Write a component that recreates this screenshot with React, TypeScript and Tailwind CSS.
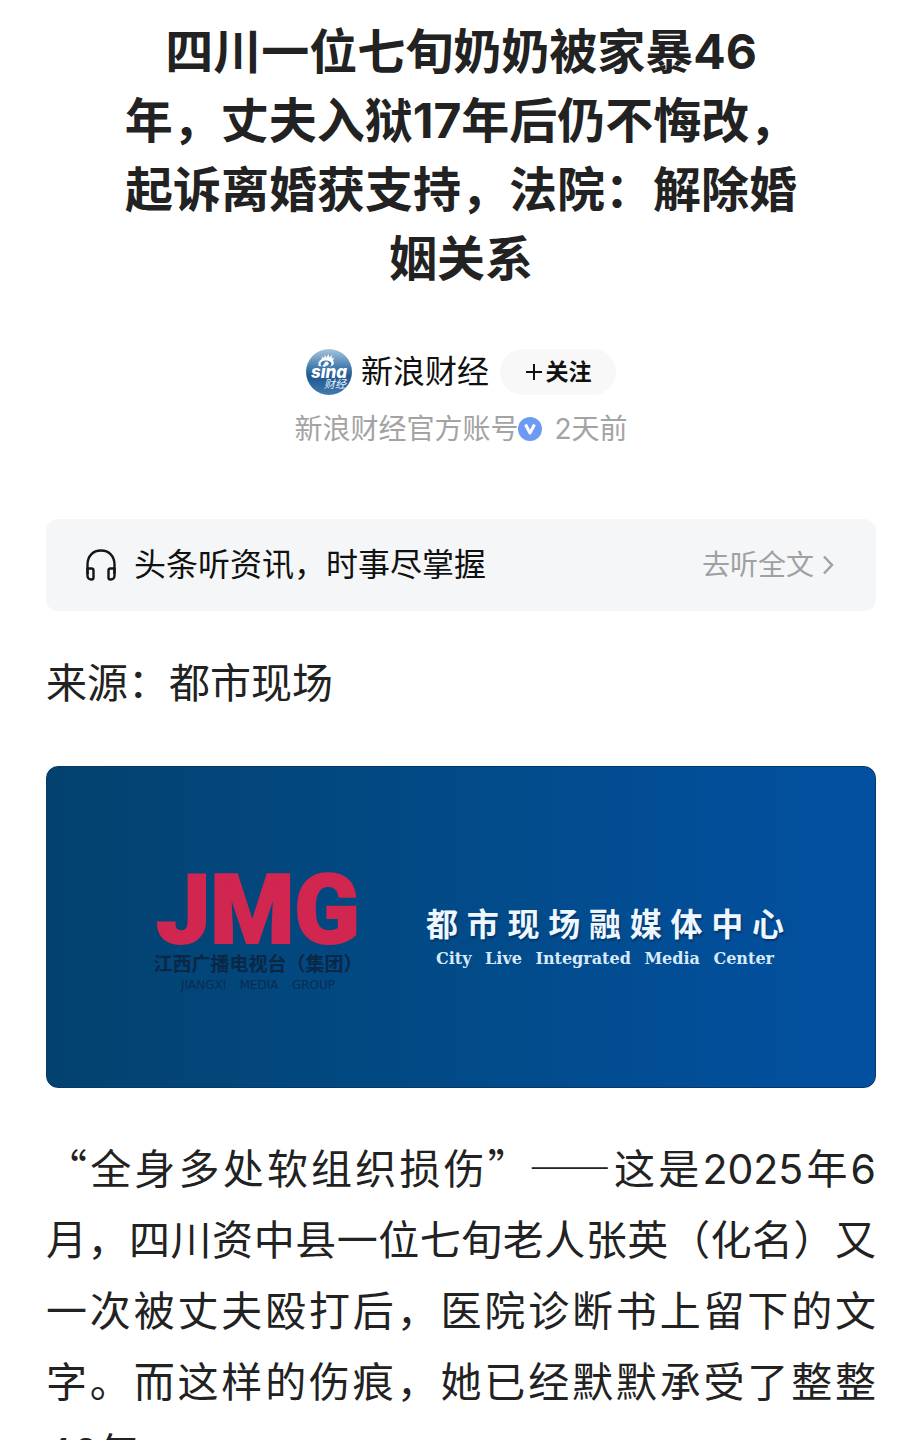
import type { ReactNode } from "react";

function FullWidth({ children }: { children: ReactNode }) {
  return <span className="font-['Noto_Sans_CJK_SC',sans-serif] leading-none">{children}</span>;
}

function SinaAvatar() {
  return (
    <svg viewBox="0 0 46 46" className="size-[46px] shrink-0" role="img" aria-label="新浪财经">
      <defs>
        <linearGradient id="sina-bg" x1="0" y1="0" x2="0" y2="1">
          <stop offset="0" stopColor="#a9c4dc" />
          <stop offset="0.35" stopColor="#4f85b4" />
          <stop offset="0.6" stopColor="#1f5790" />
          <stop offset="1" stopColor="#437cae" />
        </linearGradient>
      </defs>
      <circle cx="23" cy="23" r="23" fill="url(#sina-bg)" />
      <path d="M12.500 17c-.5-4 1.500-6 3.500-7l-.5-2.500 2.500 1.500.8-3 1.700 2.500 2-3.500.8 3.500 3-2.500-.8 3.500 3-.8-1.700 2.500c1.700 1.800 1.500 4.500-.8 5.600l-3 .9Z" fill="#fff" />
      <ellipse cx="20" cy="15" rx="5.500" ry="3.400" fill="#3f78aa" />
      <circle cx="20.500" cy="14.600" r="2.200" fill="#fff" />
      <text x="23" y="28.500" textAnchor="middle" fill="#fff" fontFamily="Inter, sans-serif" fontWeight="800" fontStyle="italic" fontSize="17">sina</text>
      <text x="29" y="39" textAnchor="middle" fill="#e8f1f8" fontFamily="Noto Sans CJK SC, sans-serif" fontStyle="italic" fontSize="11">财经</text>
    </svg>
  );
}

function VerifiedBadge() {
  return (
    <svg viewBox="0 0 24 24" className="size-6 shrink-0" role="img" aria-label="认证">
      <circle cx="12" cy="12" r="12" fill="#6d9bf3" />
      <path d="M7.500 7.500l4.500 8.500L16.500 7.500" fill="none" stroke="#fff" strokeWidth="3" strokeLinejoin="round" />
    </svg>
  );
}

function HeadphonesIcon() {
  return (
    <svg viewBox="0 0 32 32" className="size-8 shrink-0" fill="none" stroke="#161616" strokeWidth="2.400" strokeLinejoin="round" aria-hidden="true">
      <path d="M2.500 25V15.500C2.500 7 8 1.500 16 1.500S29.500 7 29.500 15.500V25" />
      <path d="M2.500 19.500H6.500a2 2 0 0 1 2 2V28.500a2 2 0 0 1-2 2H6a3.500 3.500 0 0 1-3.500-3.500ZM29.500 19.500H25.500a2 2 0 0 0-2 2V28.500a2 2 0 0 0 2 2H26a3.500 3.500 0 0 0 3.500-3.500Z" />
    </svg>
  );
}

function Banner() {
  return (
    <figure className="flex h-[322px] items-start justify-center gap-16 rounded-xl border border-[#043a68] bg-linear-to-r from-[#03426f] via-[#024b88] to-[#0350a2] pt-[98px] pl-4">
      <div className="flex w-[208px] flex-col items-center">
        <div className="font-['Roboto',sans-serif] text-[96px] leading-[90px] font-black text-[#d0264f] [-webkit-text-stroke:2px_#d0264f]">JMG</div>
        <div className="text-[19px] leading-5 font-bold whitespace-nowrap text-[#0a2746]">江西广播电视台（集团）</div>
        <div className="w-[154px] font-['DejaVu_Sans',sans-serif] text-xs leading-5 text-[#0a2c50] [text-align-last:justify]">JIANGXI MEDIA GROUP</div>
      </div>
      <div className="flex w-[358px] flex-col items-center pt-[38px] text-[#eef6ff]">
        <div className="w-full text-[32px] leading-[44px] font-bold [text-align-last:justify] [text-shadow:1px_2px_2px_#02356a]">都市现场融媒体中心</div>
        <div className="w-[338px] font-['DejaVu_Serif',serif] text-base leading-6 font-bold text-[#d8e9fa] [text-align-last:justify]">City Live Integrated Media Center</div>
      </div>
    </figure>
  );
}

export default function App() {
  return (
    <main lang="zh-CN" className="min-h-screen bg-white pr-[42px] pl-[46px] font-['Inter','Noto_Sans_CJK_SC',sans-serif] text-[#222]">
      <h1 className="mx-auto max-w-[680px] pt-[17px] text-center text-[48px] leading-[69px] font-bold">
        四川一位七旬奶奶被家暴46年，丈夫入狱17年后仍不悔改，起诉离婚获支持，法院：解除婚姻关系
      </h1>

      <div className="mt-14 flex items-center justify-center">
        <SinaAvatar />
        <a href="#author" className="ml-[9px] text-[32px] leading-[46px] text-[#111]">新浪财经</a>
        <button type="button" className="ml-[11px] flex h-[46px] w-[116px] items-center justify-center gap-[3px] rounded-full bg-[#f8f8f8] text-[23px] font-bold text-[#111]">
          <svg viewBox="0 0 18 18" className="size-[18px]" stroke="#111" strokeWidth="2" aria-hidden="true">
            <path d="M9 1v16M1 9h16" />
          </svg>
          关注
        </button>
      </div>

      <div className="mt-3 flex items-center justify-center text-[28px] leading-[44px] text-[#a3a3a3]">
        <span>新浪财经官方账号</span>
        <VerifiedBadge />
        <span className="ml-3">2天前</span>
      </div>

      <a href="#listen" className="mt-[68px] flex h-[92px] items-center rounded-xl bg-[#f5f6f8] pr-[42px] pl-[39px]">
        <HeadphonesIcon />
        <span className="ml-[17px] text-[32px] text-[#111]">头条听资讯，时事尽掌握</span>
        <span className="ml-auto text-[28px] text-[#a0a1a3]">去听全文</span>
        <svg viewBox="0 0 12 20" className="ml-2 h-5 w-3" fill="none" stroke="#a0a1a3" strokeWidth="2.500" aria-hidden="true">
          <path d="M2 1.500l8 8.500-8 8.500" />
        </svg>
      </a>

      <p className="mt-[37px] text-[41px] leading-[71px]">来源：都市现场</p>

      <div className="mt-[47px]">
        <Banner />
      </div>

      <p className="mt-[46px] text-justify text-[41px] leading-[71px]">
        <FullWidth>“</FullWidth>全身多处软组织损伤<FullWidth>”——</FullWidth>这是2025年6月，四川资中县一位七旬老人张英（化名）又一次被丈夫殴打后，医院诊断书上留下的文字。而这样的伤痕，她已经默默承受了整整<span className="whitespace-nowrap">46年</span>
      </p>
    </main>
  );
}
